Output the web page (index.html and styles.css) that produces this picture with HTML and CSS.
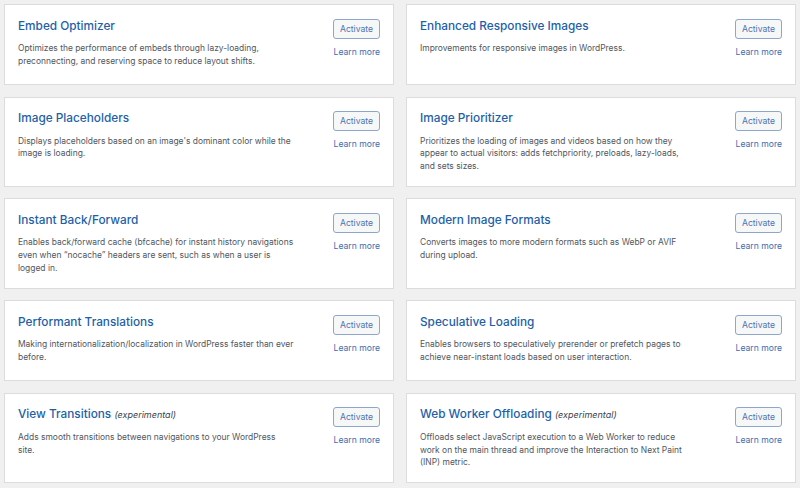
FILE: index.html
```html
<!DOCTYPE html>
<html lang="en">
<head>
<meta charset="utf-8">
<title>Performance Features</title>
<link rel="stylesheet" href="styles.css">
</head>
<body>
<div class="grid">
  <div class="card">
    <div class="info">
      <h3 class="name">Embed Optimizer</h3>
      <p class="desc">Optimizes the performance of embeds through lazy-loading,<br>preconnecting, and reserving space to reduce layout shifts.</p>
    </div>
    <div class="actions"><button class="btn">Activate</button><a class="more" href="#">Learn more</a></div>
  </div>
  <div class="card">
    <div class="info">
      <h3 class="name">Enhanced Responsive Images</h3>
      <p class="desc">Improvements for responsive images in WordPress.</p>
    </div>
    <div class="actions"><button class="btn">Activate</button><a class="more" href="#">Learn more</a></div>
  </div>
  <div class="card">
    <div class="info">
      <h3 class="name">Image Placeholders</h3>
      <p class="desc">Displays placeholders based on an image's dominant color while the<br>image is loading.</p>
    </div>
    <div class="actions"><button class="btn">Activate</button><a class="more" href="#">Learn more</a></div>
  </div>
  <div class="card">
    <div class="info">
      <h3 class="name">Image Prioritizer</h3>
      <p class="desc">Prioritizes the loading of images and videos based on how they<br>appear to actual visitors: adds fetchpriority, preloads, lazy-loads,<br>and sets sizes.</p>
    </div>
    <div class="actions"><button class="btn">Activate</button><a class="more" href="#">Learn more</a></div>
  </div>
  <div class="card">
    <div class="info">
      <h3 class="name">Instant Back/Forward</h3>
      <p class="desc">Enables back/forward cache (bfcache) for instant history navigations<br>even when “nocache” headers are sent, such as when a user is<br>logged in.</p>
    </div>
    <div class="actions"><button class="btn">Activate</button><a class="more" href="#">Learn more</a></div>
  </div>
  <div class="card">
    <div class="info">
      <h3 class="name">Modern Image Formats</h3>
      <p class="desc">Converts images to more modern formats such as WebP or AVIF<br>during upload.</p>
    </div>
    <div class="actions"><button class="btn">Activate</button><a class="more" href="#">Learn more</a></div>
  </div>
  <div class="card">
    <div class="info">
      <h3 class="name">Performant Translations</h3>
      <p class="desc">Making internationalization/localization in WordPress faster than ever<br>before.</p>
    </div>
    <div class="actions"><button class="btn">Activate</button><a class="more" href="#">Learn more</a></div>
  </div>
  <div class="card">
    <div class="info">
      <h3 class="name">Speculative Loading</h3>
      <p class="desc">Enables browsers to speculatively prerender or prefetch pages to<br>achieve near-instant loads based on user interaction.</p>
    </div>
    <div class="actions"><button class="btn">Activate</button><a class="more" href="#">Learn more</a></div>
  </div>
  <div class="card">
    <div class="info">
      <h3 class="name">View Transitions <em class="exp">(experimental)</em></h3>
      <p class="desc">Adds smooth transitions between navigations to your WordPress<br>site.</p>
    </div>
    <div class="actions"><button class="btn">Activate</button><a class="more" href="#">Learn more</a></div>
  </div>
  <div class="card">
    <div class="info">
      <h3 class="name">Web Worker Offloading <em class="exp">(experimental)</em></h3>
      <p class="desc">Offloads select JavaScript execution to a Web Worker to reduce<br>work on the main thread and improve the Interaction to Next Paint<br>(INP) metric.</p>
    </div>
    <div class="actions"><button class="btn">Activate</button><a class="more" href="#">Learn more</a></div>
  </div>
</div>
</body>
</html>
```
FILE: styles.css
```css
html, body {
  margin: 0;
  padding: 0;
  background: #f0f0f1;
  font-family: Inter, "Noto Sans", "Liberation Sans", sans-serif;
  overflow: hidden;
}
.grid {
  display: grid;
  grid-template-columns: 390px 390px;
  column-gap: 12px;
  row-gap: 11.5px;
  padding: 4px;
}
.card {
  box-sizing: border-box;
  min-height: 81px;
  background: #fff;
  border: 1px solid #dcdcde;
  display: flex;
  padding: 13.5px 13px 13px 13px;
}
.info {
  flex: 1;
  min-width: 0;
}
.name {
  margin: 0 0 8.5px;
  font-size: 11.8px;
  line-height: 15px;
  font-weight: 500;
  color: #1d5fa8;
  white-space: nowrap;
}
.exp {
  font-size: 9px;
  font-weight: 400;
  color: #3c434a;
}
.desc {
  margin: 0;
  font-size: 8.45px;
  line-height: 12.8px;
  color: #50575e;
  white-space: nowrap;
}
.actions {
  display: flex;
  flex-direction: column;
  align-items: flex-end;
  gap: 7px;
}
.btn {
  width: 47px;
  height: 20px;
  padding: 0;
  font-family: inherit;
  font-size: 8.6px;
  color: #4d74b0;
  background: #f6f7f7;
  border: 1px solid #8fa6cc;
  border-radius: 3px;
}
.more {
  font-size: 8.6px;
  line-height: 12px;
  color: #3f6cae;
  text-decoration: none;
}
```
